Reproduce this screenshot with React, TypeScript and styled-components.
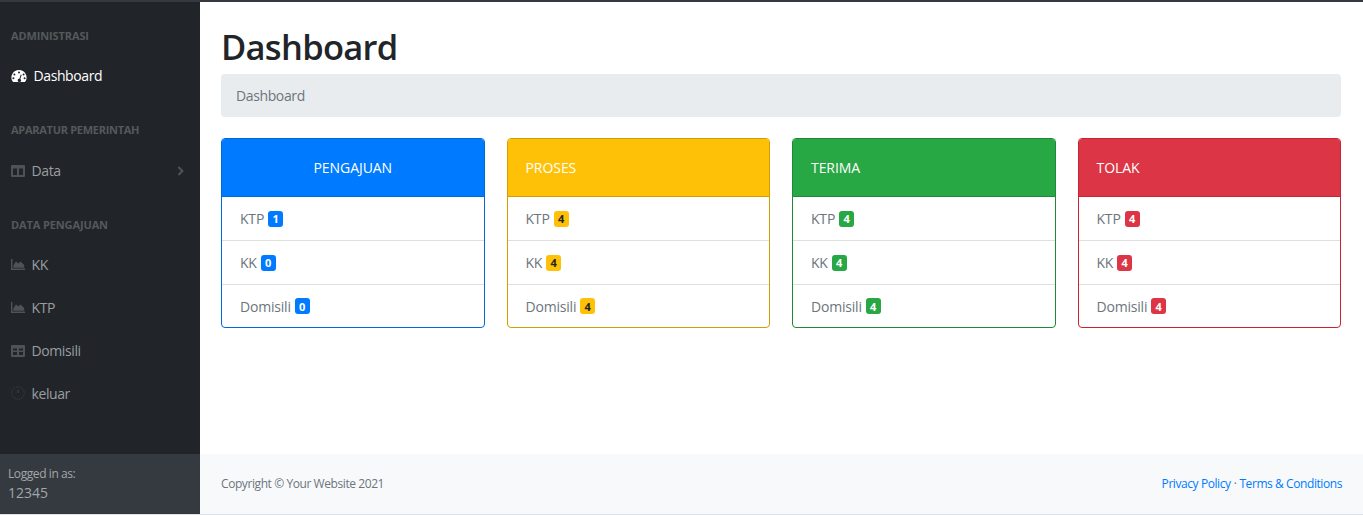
import React from "react";
import styled, { createGlobalStyle } from "styled-components";

const GlobalStyle = createGlobalStyle`
  html, body {
    margin: 0;
    padding: 0;
    height: 100%;
    background: #ffffff;
  }
  body {
    font-family: "Open Sans", "Noto Sans", "Liberation Sans", sans-serif;
    color: #212529;
    overflow: hidden;
  }
`;

const Page = styled.div`
  display: flex;
  flex-direction: column;
  width: 1363px;
  height: 515px;
  box-sizing: border-box;
  border-top: 2px solid #343a40;
  border-bottom: 1px solid #dee2e6;
`;

const Body = styled.div`
  display: flex;
  flex: 1;
  min-height: 0;
`;

const Sidebar = styled.aside`
  display: flex;
  flex-direction: column;
  width: 200px;
  flex-shrink: 0;
  background: #212529;
`;

const SideMenu = styled.nav`
  flex: 1;
  display: flex;
  flex-direction: column;
`;

const SideHeading = styled.div<{ $top: number; $bottom: number; $spacing?: number }>`
  height: 14px;
  line-height: 14px;
  margin: ${(p) => p.$top}px 0 ${(p) => p.$bottom}px 11px;
  font-size: 11px;
  font-weight: 700;
  letter-spacing: ${(p) => p.$spacing ?? -0.12}px;
  color: #55595c;
`;

const SideLink = styled.a<{ $active?: boolean; $height?: number }>`
  display: flex;
  align-items: center;
  height: ${(p) => p.$height ?? 43}px;
  padding: 0 16px 0 11px;
  font-size: 14px;
  letter-spacing: -0.4px;
  color: ${(p) => (p.$active ? "#ffffff" : "#9a9da0")};
`;

const SideIcon = styled.span<{ $active?: boolean }>`
  display: flex;
  align-items: center;
  width: ${(p) => (p.$active ? 22.5 : 20.5)}px;
  color: ${(p) => (p.$active ? "#ffffff" : "#4f5357")};
`;

const Chevron = styled.span`
  display: flex;
  margin-left: auto;
  color: #4f5357;
`;

const SideFooter = styled.div`
  height: 60px;
  box-sizing: border-box;
  padding: 11px 8px 0;
  background: #343a40;
  color: #a3a6a9;
`;

const LoggedLabel = styled.div`
  font-size: 12px;
  line-height: 18px;
  letter-spacing: -0.42px;
`;

const LoggedUser = styled.div`
  font-size: 14px;
  line-height: 20px;
`;

const Main = styled.div`
  flex: 1;
  min-width: 0;
  display: flex;
  flex-direction: column;
`;

const Content = styled.main`
  flex: 1;
  padding: 0 22px 0 21px;
`;

const Title = styled.h1`
  margin: 0;
  padding-top: 20px;
  padding-bottom: 2px;
  height: 50px;
  box-sizing: content-box;
  font-size: 34.5px;
  line-height: 50px;
  font-weight: 600;
  letter-spacing: -0.72px;
  color: #212529;
`;

const Breadcrumb = styled.div`
  height: 43px;
  box-sizing: border-box;
  padding: 0 15px;
  display: flex;
  align-items: center;
  border-radius: 4px;
  background: #e9ecef;
  font-size: 14px;
  letter-spacing: -0.38px;
  color: #6c757d;
`;

const CardGrid = styled.div`
  display: grid;
  grid-template-columns: repeat(4, 1fr);
  column-gap: 22px;
  margin-top: 21px;
`;

const Card = styled.section<{ $edge: string }>`
  height: 190px;
  box-sizing: border-box;
  border: 1px solid ${(p) => p.$edge};
  border-radius: 4px;
  overflow: hidden;
  background: #ffffff;
`;

const CardHeader = styled.header<{ $color: string; $edge: string; $center?: boolean }>`
  height: 58px;
  box-sizing: border-box;
  display: flex;
  align-items: center;
  justify-content: ${(p) => (p.$center ? "center" : "flex-start")};
  padding: 0 18px;
  background: ${(p) => p.$color};
  border-bottom: 1px solid ${(p) => p.$edge};
  font-size: 14px;
  letter-spacing: -0.06px;
  color: #ffffff;
`;

const CardRow = styled.div`
  box-sizing: border-box;
  display: flex;
  align-items: center;
  gap: 4px;
  padding: 0 18px;
  height: 43px;
  font-size: 14px;
  letter-spacing: -0.2px;
  color: #6c757d;

  & + & {
    border-top: 1px solid #dfdfdf;
  }
  &:nth-of-type(2) {
    height: 44px;
  }
`;

const Badge = styled.span<{ $color: string; $dark?: boolean }>`
  display: inline-flex;
  align-items: center;
  justify-content: center;
  width: 15px;
  height: 16px;
  border-radius: 3px;
  background: ${(p) => p.$color};
  font-size: 11px;
  font-weight: 700;
  letter-spacing: 0;
  color: ${(p) => (p.$dark ? "#212529" : "#ffffff")};
`;

const Footer = styled.footer`
  height: 60px;
  box-sizing: border-box;
  display: flex;
  align-items: center;
  justify-content: space-between;
  padding: 0 21px 2px;
  background: #f8f9fa;
  font-size: 12px;
  letter-spacing: -0.42px;
  color: #6c757d;
`;

const FooterLinks = styled.div`
  display: flex;
  gap: 3px;
`;

const FooterLink = styled.a`
  color: #007bff;
`;

const GaugeIcon = () => (
  <svg width="16" height="14" viewBox="0 0 16 14">
    <path
      fillRule="evenodd"
      fill="currentColor"
      d="M8 1a7.5 7.5 0 0 0-6.5 11.3c.2.4.5.7.9.7h11.2c.4 0 .7-.3.9-.7A7.5 7.5 0 0 0 8 1zM8 2.6a1 1 0 1 1 0 2 1 1 0 0 1 0-2zM3.4 4.6a1 1 0 1 1 0 2 1 1 0 0 1 0-2zM12.6 4.6a1 1 0 1 1 0 2 1 1 0 0 1 0-2zM2.4 8.2a1 1 0 1 1 0 2 1 1 0 0 1 0-2zM13.6 8.2a1 1 0 1 1 0 2 1 1 0 0 1 0-2zM9.8 5.6l.9.3-1.4 4.2a1.6 1.6 0 1 1-1-.3z"
    />
  </svg>
);

const ColumnsIcon = () => (
  <svg width="14" height="12" viewBox="0 0 14 12">
    <path
      fillRule="evenodd"
      fill="currentColor"
      d="M1 0h12a1 1 0 0 1 1 1v10a1 1 0 0 1-1 1H1a1 1 0 0 1-1-1V1a1 1 0 0 1 1-1zM2 3.5V10h4V3.5zM8 3.5V10h4V3.5z"
    />
  </svg>
);

const AreaChartIcon = () => (
  <svg width="14" height="11" viewBox="0 0 14 11">
    <path
      fill="currentColor"
      d="M0 0h1.4v9.6H14V11H0zM2.4 8.8V6.2L5 2.6l2.3 2 2.2-2.2 3.7 3.6v2.8z"
    />
  </svg>
);

const TableIcon = () => (
  <svg width="14" height="12" viewBox="0 0 14 12">
    <path
      fillRule="evenodd"
      fill="currentColor"
      d="M1 0h12a1 1 0 0 1 1 1v10a1 1 0 0 1-1 1H1a1 1 0 0 1-1-1V1a1 1 0 0 1 1-1zM2 3.5v2h4v-2zM8 3.5v2h4v-2zM2 7v3h4V7zM8 7v3h4V7z"
    />
  </svg>
);

const DottedClockIcon = () => (
  <svg width="14" height="14" viewBox="0 0 14 14">
    <circle cx="7" cy="7" r="6.2" fill="none" stroke="#45494d" strokeWidth="0.9" strokeDasharray="1.2 1.2" />
    <path d="M7 3.5v3.5" stroke="#45494d" strokeWidth="0.9" fill="none" />
  </svg>
);

const ChevronIcon = () => (
  <svg width="7" height="10" viewBox="0 0 7 10">
    <path d="M1.4 1l4 4-4 4" fill="none" stroke="currentColor" strokeWidth="2" />
  </svg>
);

type Status = {
  title: string;
  color: string;
  edge: string;
  center?: boolean;
  dark?: boolean;
  counts: [number, number, number];
};

const statuses: Status[] = [
  { title: "PENGAJUAN", color: "#007bff", edge: "#0069d9", center: true, counts: [1, 0, 0] },
  { title: "PROSES", color: "#ffc107", edge: "#d39e00", dark: true, counts: [4, 4, 4] },
  { title: "TERIMA", color: "#28a745", edge: "#218838", counts: [4, 4, 4] },
  { title: "TOLAK", color: "#dc3545", edge: "#c82333", counts: [4, 4, 4] },
];

const rowLabels = ["KTP", "KK", "Domisili"];

export default function App() {
  return (
    <>
      <GlobalStyle />
      <Page>
        <Body>
          <Sidebar>
            <SideMenu>
              <SideHeading $top={27} $bottom={11}>ADMINISTRASI</SideHeading>
              <SideLink $active>
                <SideIcon $active><GaugeIcon /></SideIcon>
                Dashboard
              </SideLink>
              <SideHeading $top={26} $bottom={12} $spacing={-0.28}>APARATUR PEMERINTAH</SideHeading>
              <SideLink>
                <SideIcon><ColumnsIcon /></SideIcon>
                Data
                <Chevron><ChevronIcon /></Chevron>
              </SideLink>
              <SideHeading $top={26} $bottom={11}>DATA PENGAJUAN</SideHeading>
              <SideLink>
                <SideIcon><AreaChartIcon /></SideIcon>
                KK
              </SideLink>
              <SideLink>
                <SideIcon><AreaChartIcon /></SideIcon>
                KTP
              </SideLink>
              <SideLink>
                <SideIcon><TableIcon /></SideIcon>
                Domisili
              </SideLink>
              <SideLink $height={42}>
                <SideIcon><DottedClockIcon /></SideIcon>
                keluar
              </SideLink>
            </SideMenu>
            <SideFooter>
              <LoggedLabel>Logged in as:</LoggedLabel>
              <LoggedUser>12345</LoggedUser>
            </SideFooter>
          </Sidebar>
          <Main>
            <Content>
              <Title>Dashboard</Title>
              <Breadcrumb>Dashboard</Breadcrumb>
              <CardGrid>
                {statuses.map((s) => (
                  <Card key={s.title} $edge={s.edge}>
                    <CardHeader $color={s.color} $edge={s.edge} $center={s.center}>{s.title}</CardHeader>
                    {rowLabels.map((label, i) => (
                      <CardRow key={label}>
                        {label}
                        <Badge $color={s.color} $dark={s.dark}>{s.counts[i]}</Badge>
                      </CardRow>
                    ))}
                  </Card>
                ))}
              </CardGrid>
            </Content>
            <Footer>
              <span>Copyright © Your Website 2021</span>
              <FooterLinks>
                <FooterLink>Privacy Policy</FooterLink>
                <span>·</span>
                <FooterLink>Terms &amp; Conditions</FooterLink>
              </FooterLinks>
            </Footer>
          </Main>
        </Body>
      </Page>
    </>
  );
}
